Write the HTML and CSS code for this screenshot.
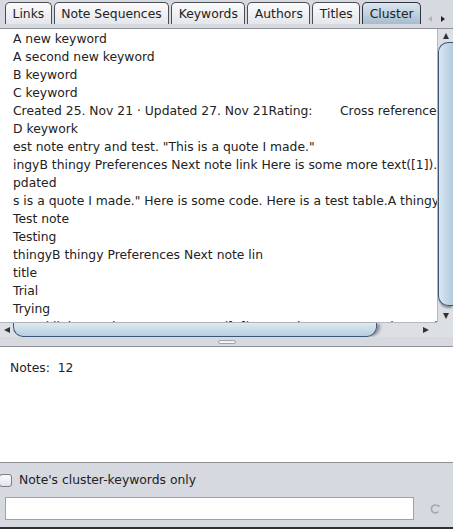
FILE: index.html
```html
<!DOCTYPE html>
<html>
<head>
<meta charset="utf-8">
<link rel="stylesheet" href="styles.css">
</head>
<body>
<div class="app">
  <div class="tabbar">
    <div class="tabs">
      <div class="tab">Links</div>
      <div class="tab">Note Sequences</div>
      <div class="tab">Keywords</div>
      <div class="tab">Authors</div>
      <div class="tab">Titles</div>
      <div class="tab active">Cluster</div>
    </div>
    <div class="tabnav">
      <svg width="8" height="8" viewBox="0 0 8 8"><path d="M6 1 L2 4 L6 7 Z" fill="#b0b4ba"/></svg>
      <svg width="8" height="8" viewBox="0 0 8 8"><path d="M2 1 L6 4 L2 7 Z" fill="#222"/></svg>
    </div>
  </div>
  <div class="scrollpane">
    <div class="list">
      <div class="item">A new keyword</div>
      <div class="item">A second new keyword</div>
      <div class="item">B keyword</div>
      <div class="item">C keyword</div>
      <div class="item">Created 25. Nov 21 · Updated 27. Nov 21Rating:       Cross reference</div>
      <div class="item">D keywork</div>
      <div class="item">est note entry and test. "This is a quote I made."</div>
      <div class="item">ingyB thingy Preferences Next note link Here is some more text([1]).</div>
      <div class="item">pdated</div>
      <div class="item">s is a quote I made." Here is some code. Here is a test table.A thingy</div>
      <div class="item">Test note</div>
      <div class="item">Testing</div>
      <div class="item">thingyB thingy Preferences Next note lin</div>
      <div class="item">title</div>
      <div class="item">Trial</div>
      <div class="item">Trying</div>
      <div class="item">ternal link Here is some more text([1]) Example 1 textexample 1 A thing</div>
    </div>
    <div class="vscroll">
      <div class="arrow up"><svg width="8" height="8" viewBox="0 0 8 8"><path d="M4 1 L7 7 L1 7 Z" fill="#333"/></svg></div>
      <div class="vtrack"><div class="vthumb"></div></div>
      <div class="arrow down"><svg width="8" height="8" viewBox="0 0 8 8"><path d="M1 1 L7 1 L4 7 Z" fill="#333"/></svg></div>
    </div>
    <div class="hscroll">
      <div class="arrow left"><svg width="8" height="8" viewBox="0 0 8 8"><path d="M7 1 L7 7 L1 4 Z" fill="#333"/></svg></div>
      <div class="htrack"><div class="hthumb"></div></div>
      <div class="arrow right"><svg width="8" height="8" viewBox="0 0 8 8"><path d="M1 1 L7 4 L1 7 Z" fill="#333"/></svg></div>
    </div>
    <div class="corner"></div>
  </div>
  <div class="splitter"><div class="grip"></div></div>
  <div class="notes"><span class="notestext">Notes:&nbsp; 12</span></div>
  <div class="bottom">
    <label class="check"><span class="box"></span><span>Note's cluster-keywords only</span></label>
    <div class="searchrow">
      <div class="field"></div>
      <svg class="refresh" width="12" height="12" viewBox="0 0 12 12"><path d="M9.5 3.5 A4 4 0 1 0 9.5 8.5" fill="none" stroke="#a4a8ae" stroke-width="1.6"/><path d="M8 2 L10.5 2 L10.5 4.5 Z" fill="#a4a8ae"/></svg>
    </div>
  </div>
</div>
</body>
</html>
```
FILE: styles.css
```css
* { box-sizing: border-box; }
html, body { margin: 0; padding: 0; }
body {
  font-family: "DejaVu Sans", sans-serif;
  font-size: 12.35px;
  color: #222;
  background: #d6d9df;
  width: 453px;
  height: 529px;
  overflow: hidden;
}
.app { display: flex; flex-direction: column; height: 529px; }
.tabbar {
  height: 29px;
  flex: none;
  display: flex;
  align-items: flex-end;
  justify-content: space-between;
  background: #d6d9df;
  border-bottom: 1px solid #8e9297;
  padding: 0 0 0 5px;
}
.tabs { display: flex; gap: 2px; align-items: flex-end; margin-bottom: 4px; }
.tab {
  height: 22px;
  padding: 0 6.5px;
  display: flex;
  align-items: center;
  white-space: nowrap;
  font-size: 12.35px;
  color: #222;
  background: linear-gradient(#fbfbfc, #e4e6ea);
  border: 1px solid #4a4d52;
  border-bottom: none;
  border-radius: 5px 5px 0 0;
}
.tab.active {
  background: linear-gradient(#dbe6f0, #a6bccf);
  border-color: #2e3440;
}
.tabnav { display: flex; gap: 5px; padding: 0 6px 5px 0; }
.scrollpane {
  flex: none;
  display: grid;
  grid-template-columns: 1fr 16px;
  grid-template-rows: 293px 15px;
  background: #fff;
}
.list {
  overflow: hidden;
  padding: 1px 0 0 13px;
}
.item { height: 18px; line-height: 18px; color: #222; white-space: pre; }
.vscroll {
  display: flex; flex-direction: column;
  background: #dcdfe4;
  border-left: 1px solid #b5b9bf;
}
.arrow { display: flex; align-items: center; justify-content: center; flex: none; }
.vscroll .arrow { height: 13px; }
.vtrack { flex: 1; display: flex; }
.vthumb {
  flex: 1;
  margin: 0 0 3px 0;
  background: linear-gradient(90deg, #dce8f1, #c4d8e8 50%, #b2cbdf);
  border: 1px solid #3b5678;
  border-right: none;
  border-radius: 10px 0 0 10px;
  box-shadow: 0 3px 2px -1px #8a8e94;
}
.hscroll {
  display: flex;
  background: #dcdfe4;
  border-top: 1px solid #b5b9bf;
}
.hscroll .arrow { width: 13px; }
.hscroll .arrow.right { width: 22px; }
.htrack { flex: 1; display: flex; }
.hthumb {
  width: 364px;
  background: linear-gradient(#dfe9f2, #b6cde0);
  border: 1px solid #3b5678;
  border-top: none;
  border-radius: 0 0 10px 10px;
  box-shadow: 4px 0 3px -1px #8a8e94;
}
.corner { background: #dcdfe4; }
.splitter {
  height: 10px;
  flex: none;
  background: #d6d9df;
  border-bottom: 1px solid #8e9297;
  display: flex; justify-content: center; align-items: center;
}
.grip { width: 18px; height: 4px; border: 1px solid #a0a4aa; border-radius: 2px; background: #f2f3f5; }
.notes {
  height: 116px;
  flex: none;
  background: #fff;
  padding: 14px 0 0 10px;
  color: #222;
  border-bottom: 1px solid #8e9297;
}
.notestext { white-space: pre; }
.bottom {
  flex: 1;
  background: #d6d9df;
  display: flex; flex-direction: column;
  border-bottom: 2px solid #2c2f33;
}
.check { display: flex; align-items: center; gap: 7px; height: 20px; margin-top: 7px; color: #222; }
.box { width: 13px; height: 13px; border: 1px solid #7b7f85; border-radius: 3px; background: linear-gradient(#fbfbfc, #e2e4e8); margin-left: -1px; }
.searchrow { display: flex; align-items: center; margin-top: 7px; padding-left: 5px; }
.field { width: 409px; height: 23px; background: #fff; border: 1px solid #9ea2a8; }
.refresh { margin-left: 15px; }
```
